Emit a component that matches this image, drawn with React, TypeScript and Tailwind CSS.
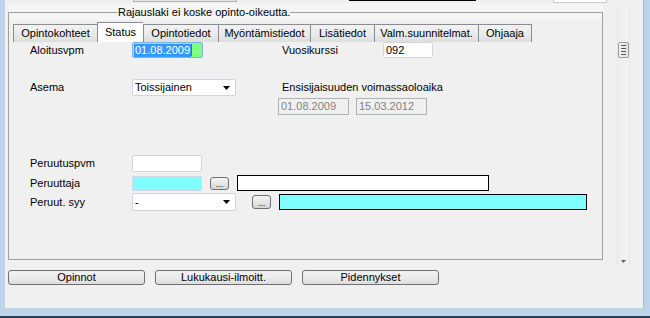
import { ReactNode } from "react";

const tabs = [
  { label: "Opintokohteet", w: "w-[84px]" },
  { label: "Status", w: "w-[46px]", active: true },
  { label: "Opintotiedot", w: "w-[75px]" },
  { label: "Myöntämistiedot", w: "w-[92px]" },
  { label: "Lisätiedot", w: "w-[64px]" },
  { label: "Valm.suunnitelmat.", w: "w-[104px]" },
  { label: "Ohjaaja", w: "w-[54px]" },
];

const Arrow = () => (
  <svg width="7" height="4" viewBox="0 0 7 4" className="shrink-0">
    <path d="M0 0h7L3.5 4z" fill="#000" />
  </svg>
);

const Label = ({ children }: { children: ReactNode }) => (
  <span className="w-[102px] shrink-0 leading-[13px]">{children}</span>
);

const Select = ({ value }: { value: string }) => (
  <div className="flex h-full w-[104px] items-center justify-between rounded-[2px] border border-[#d2d5da] bg-white pl-[2px] pr-[5px]">
    <span className="leading-[13px]">{value}</span>
    <Arrow />
  </div>
);

const DotsButton = ({ className }: { className: string }) => (
  <button
    className={`flex items-end justify-center rounded-[3px] border border-[#707070] bg-[linear-gradient(#f4f4f4,#e6e6e6_50%,#d6d6d6)] text-[9px] leading-[9px] ${className}`}
  >
    ...
  </button>
);

export default function App() {
  return (
    <div
      className="flex h-[318px] w-[650px] flex-col overflow-hidden bg-[#f0f0f0] text-[11px] text-black"
      style={{ fontFamily: '"Liberation Sans", Arial, sans-serif' }}
    >
      <div className="flex h-[308px]">
        {/* left frame */}
        <div className="w-[5px] shrink-0 bg-[#bcd3ea]" />

        <div className="flex w-[638px] flex-col">
          {/* cut-off controls on top */}
          <div className="flex h-[4px] items-start">
            <div className="ml-[128px] h-[2px] w-[104px] border-x border-b border-[#b5b5b5] bg-[#e4e4e4]" />
            <div className="ml-[112px] h-[1px] w-[127px] bg-black" />
            <div className="ml-[77px] h-[3px] w-[54px] border-x border-b border-[#c9ccd3] bg-white" />
          </div>

          <div className="flex h-[264px]">
            <div className="ml-[3px] w-[595px] bg-[linear-gradient(#f5f5f5_16px,#f0f0f0_16px)]">
              <fieldset className="mt-[2px] h-[254px] border border-[#a0a0a0]">
                <legend className="ml-[109px] leading-[13px]">
                  Rajauslaki ei koske opinto-oikeutta.
                </legend>

                {/* tabs */}
                <div className="ml-[4px] mt-[3px] flex h-[20px] items-end">
                  {tabs.map((t, i) => (
                    <div
                      key={t.label}
                      className={`flex shrink-0 items-center justify-center border-l border-t border-[#898c95] leading-[13px] ${t.w} ${
                        i === tabs.length - 1 ? "border-r" : ""
                      } ${
                        t.active
                          ? "h-[20px] bg-white pb-[1px]"
                          : "h-[18px] bg-[linear-gradient(#f2f2f2,#ebebeb_50%,#dddddd)]"
                      }`}
                    >
                      {t.label}
                    </div>
                  ))}
                </div>

                <div className="flex flex-col pl-[21px]">
                  {/* Aloitusvpm */}
                  <div className="flex h-[16px] items-center">
                    <Label>Aloitusvpm</Label>
                    <div className="flex h-full w-[71px] items-center rounded-[2px] border border-[#7eb4ea] bg-[#80ff80] pl-[1px]">
                      <span className="bg-[#3399ff] px-[1px] leading-[13px] text-white">01.08.2009</span>
                      <span className="h-[12px] w-[1px] bg-[#e0401a]" />
                    </div>
                    <span className="ml-[79px] w-[101px] leading-[13px]">Vuosikurssi</span>
                    <div className="flex h-full w-[50px] items-center rounded-[2px] border border-[#d2d5da] bg-white pl-[2px] leading-[13px]">
                      092
                    </div>
                  </div>

                  {/* Asema */}
                  <div className="mt-[21px] flex h-[17px] items-center">
                    <Label>Asema</Label>
                    <Select value="Toissijainen" />
                    <span className="ml-[46px] leading-[13px]">Ensisijaisuuden voimassaoloaika</span>
                  </div>
                  <div className="ml-[248px] mt-[2px] flex h-[17px] gap-[7px]">
                    {["01.08.2009", "15.03.2012"].map((d) => (
                      <div
                        key={d}
                        className="flex h-full w-[71px] items-center border border-[#adb2b5] pl-[2px] leading-[13px] text-[#838383]"
                      >
                        {d}
                      </div>
                    ))}
                  </div>

                  {/* Peruutus */}
                  <div className="mt-[40px] flex h-[17px] items-center">
                    <Label>Peruutuspvm</Label>
                    <div className="h-full w-[70px] rounded-[2px] border border-[#d2d5da] bg-white" />
                  </div>
                  <div className="mt-[3px] flex h-[16px] items-center">
                    <Label>Peruuttaja</Label>
                    <div className="h-[15px] w-[70px] rounded-[2px] border border-[#d2d5da] bg-[#80ffff]" />
                    <DotsButton className="ml-[8px] h-[13px] w-[19px]" />
                    <div className="ml-[8px] h-full w-[252px] border border-black bg-white" />
                  </div>
                  <div className="mt-[2px] flex h-[18px] items-center">
                    <Label>Peruut. syy</Label>
                    <Select value="-" />
                    <DotsButton className="ml-[16px] h-[14px] w-[19px]" />
                    <div className="ml-[8px] h-[16px] w-[308px] border border-black bg-[#80ffff]" />
                  </div>
                </div>
              </fieldset>
            </div>

            {/* scrollbar */}
            <div className="ml-[14px] flex w-[13px] flex-col items-center border-x border-[#e6e6e6] bg-[#f0f0f0]">
              <div className="mt-[38px] flex h-[16px] w-[11px] flex-col items-center justify-center gap-[2px] rounded-[2px] border border-[#9b9b9b] bg-[linear-gradient(to_right,#f3f3f3,#e2e2e2)]">
                <div className="h-[1px] w-[5px] bg-[#555]" />
                <div className="h-[1px] w-[5px] bg-[#555]" />
                <div className="h-[1px] w-[5px] bg-[#555]" />
                <div className="h-[1px] w-[5px] bg-[#555]" />
              </div>
              <div className="mt-auto mb-[5px]">
                <svg width="5" height="3" viewBox="0 0 5 3">
                  <path d="M0 0h5L2.5 3z" fill="#606060" />
                </svg>
              </div>
            </div>
          </div>

          {/* buttons */}
          <div className="ml-[3px] mt-[2px] flex gap-[10px]">
            {["Opinnot", "Lukukausi-ilmoitt.", "Pidennykset"].map((b) => (
              <button
                key={b}
                className="flex h-[15px] w-[137px] items-center justify-center rounded-[3px] border border-[#707070] bg-[linear-gradient(#f2f2f2,#ebebeb_50%,#dddddd)] leading-[13px]"
              >
                {b}
              </button>
            ))}
          </div>
        </div>

        {/* right frame */}
        <div className="w-[7px] shrink-0 border-l border-[#a3bcd6] bg-[#bcd3ea]" />
      </div>
      <div className="h-[8px] bg-[#bcd3ea]" />
      <div className="h-[2px] bg-[#2a3f52]" />
    </div>
  );
}
